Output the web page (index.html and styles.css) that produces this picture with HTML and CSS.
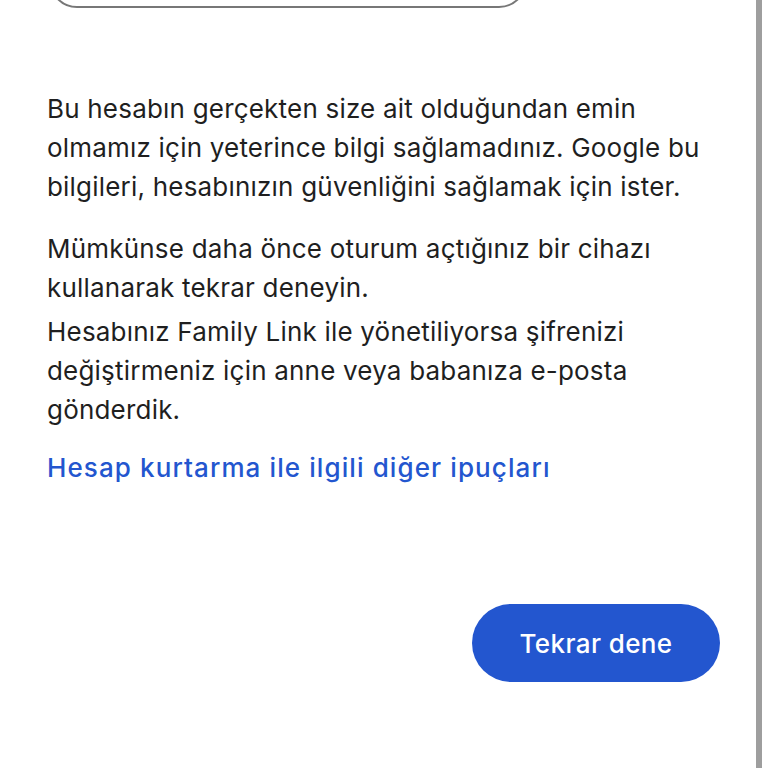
FILE: index.html
```html
<!DOCTYPE html>
<html lang="tr">
<head>
    <meta charset="UTF-8">
    <meta name="viewport" content="width=device-width, initial-scale=1.0">
    <title>Hesap kurtarma</title>
    <link rel="stylesheet" href="styles.css">
</head>
<body>
    <div class="page">
        <!-- alt kısmı görünen giriş alanı -->
        <div class="field"></div>

        <div class="content">
            <p class="msg">Bu hesabın gerçekten size ait olduğundan emin olmamız için yeterince bilgi sağlamadınız. Google bu bilgileri, hesabınızın güvenliğini sağlamak için ister.</p>
            <p class="msg msg-second">Mümkünse daha önce oturum açtığınız bir cihazı kullanarak tekrar deneyin.</p>
            <p class="msg msg-third">Hesabınız Family Link ile yönetiliyorsa şifrenizi değiştirmeniz için anne veya babanıza e-posta gönderdik.</p>
            <a class="tips" href="#">Hesap kurtarma ile ilgili diğer ipuçları</a>
        </div>

        <div class="actions">
            <button class="retry">Tekrar dene</button>
        </div>
    </div>
</body>
</html>
```

FILE: styles.css
```css
:root {
    --text: #1f1f1f;
    --blue: #2356cf;
    --outline: #777777;
    --bar: #9e9e9e;
}

* {
    box-sizing: border-box;
    margin: 0;
    padding: 0;
}

body {
    background: #ffffff;
    font-family: Inter, Roboto, sans-serif;
    color: var(--text);
    overflow: hidden;
}

.page {
    display: flow-root;
    width: 762px;
    height: 768px;
    border-right: 6px solid var(--bar);
}

.field {
    width: 478px;
    height: 56px;
    margin: -48px 0 0 49px;
    border: 2px solid var(--outline);
    border-radius: 28px;
}

.content {
    width: 707px;
    padding: 81px 0 0 47px;
}

.msg {
    font-size: 26px;
    line-height: 39px;
    letter-spacing: 0.2px;
}

.msg-second {
    margin-top: 23px;
}

.msg-third {
    margin-top: 5px;
}

.tips {
    display: block;
    margin-top: 19px;
    font-size: 26px;
    line-height: 39px;
    font-weight: 500;
    letter-spacing: 1.1px;
    color: var(--blue);
    text-decoration: none;
}

.actions {
    display: flex;
    justify-content: flex-end;
    padding: 117px 36px 0 0;
}

.retry {
    width: 248px;
    height: 78px;
    border: none;
    border-radius: 39px;
    background: var(--blue);
    color: #ffffff;
    font-family: Inter, Roboto, sans-serif;
    font-size: 26px;
    font-weight: 500;
    letter-spacing: 0.4px;
}
```
